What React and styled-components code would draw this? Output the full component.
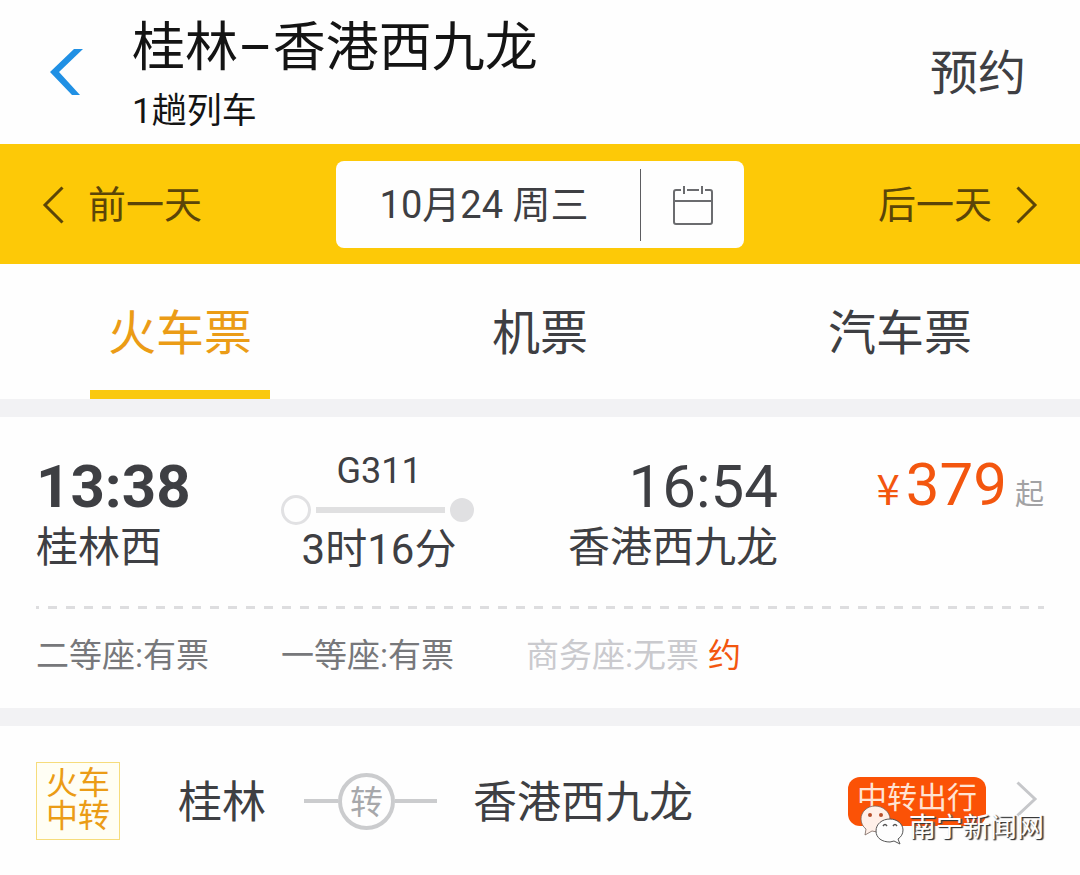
import React from "react";
import styled, { createGlobalStyle } from "styled-components";

const GlobalStyle = createGlobalStyle`
  * { box-sizing: border-box; }
  body {
    margin: 0;
    background: #fefefe;
    color: #3e3f43;
    font-family: Roboto, "Noto Sans CJK SC", sans-serif;
    white-space: nowrap;
  }
  button {
    margin: 0;
    padding: 0;
    border: 0;
    background: none;
    color: inherit;
    font: inherit;
    cursor: pointer;
  }
  h1, p { margin: 0; font-weight: 400; }
`;

const Page = styled.main`
  min-height: 100vh;
  background: #fefefe;
`;

const Header = styled.header`
  display: flex;
  align-items: center;
  height: 144px;
  padding: 0 54px 0 48px;
`;

const BackButton = styled.button`
  display: flex;
  width: 84px;
`;

const Heading = styled.div`
  flex: 1;
  padding-top: 10px;
  color: #141414;
`;

const Title = styled.h1`
  font-size: 53px;
  line-height: 70px;
`;

const Subtitle = styled.p`
  font-size: 35px;
  line-height: 58px;
`;

const ReserveButton = styled.button`
  padding-top: 4px;
  font-size: 48px;
  line-height: 72px;
`;

const DateBar = styled.section`
  display: grid;
  grid-template-columns: 1fr 408px 1fr;
  align-items: center;
  height: 120px;
  padding: 1px 42px 0;
  background: #fdc907;
`;

const DayButton = styled.button`
  display: flex;
  align-items: center;
  gap: 24px;
  justify-self: ${(p) => p.$side};
  color: #5b4508;
  font-size: 38px;
  line-height: 60px;
`;

const DateBox = styled.div`
  display: flex;
  align-items: center;
  height: 87px;
  border-radius: 8px;
  background: #fefefe;
`;

const DateButton = styled.button`
  flex: 1;
  padding-right: 8px;
  font-size: 38px;
  line-height: 72px;
  border-right: 1px solid #5c5d60;
`;

const CalendarButton = styled.button`
  display: flex;
  justify-content: center;
  width: 103px;
`;

const Tabs = styled.nav`
  display: grid;
  grid-template-columns: repeat(3, 1fr);
  height: 135px;
`;

const Tab = styled.button`
  display: flex;
  flex-direction: column;
  align-items: center;
  justify-content: space-between;
  padding-top: 34px;
  color: ${(p) => (p.$active ? "#eb9c16" : "inherit")};
  font-size: 48px;
  line-height: 72px;

  &::after {
    content: "";
    width: 50%;
    height: 9px;
    background: ${(p) => (p.$active ? "#fac90f" : "transparent")};
  }
`;

const Divider = styled.div`
  height: 18px;
  background: #f2f2f4;
`;

const TrainCard = styled.article`
  padding: 33px 36px 27px;
`;

const TripRow = styled.div`
  display: grid;
  grid-template-columns: 35fr 28fr 43fr 38fr;
  height: 156px;
`;

const Stop = styled.div`
  text-align: ${(p) => p.$align};
`;

const Time = styled.time`
  display: block;
  font-size: 60px;
  line-height: 74px;
  font-weight: ${(p) => (p.$bold ? 700 : 400)};
`;

const Station = styled.p`
  font-size: 42px;
  line-height: 48px;
`;

const Journey = styled.div`
  display: flex;
  flex-direction: column;
  align-items: center;
`;

const TrainNumber = styled.p`
  font-size: 36px;
  line-height: 42px;
`;

const Track = styled.div`
  display: flex;
  align-items: center;
  gap: 5px;
  width: 100%;
  height: 36px;
  padding-right: 3px;
`;

const TrackStart = styled.span`
  width: 30px;
  height: 30px;
  border: 3px solid #e1e1e3;
  border-radius: 50%;
`;

const TrackLine = styled.span`
  flex: 1;
  height: 6px;
  background: #e0e0e1;
`;

const TrackEnd = styled.span`
  width: 24px;
  height: 24px;
  border-radius: 50%;
  background: #e0e0e2;
`;

const Duration = styled.p`
  font-size: 42px;
  line-height: 44px;
`;

const Price = styled.p`
  display: flex;
  align-items: baseline;
  justify-content: flex-end;
  color: #f3560f;
  line-height: 70px;
`;

const Currency = styled.span`
  margin-right: 6px;
  font-family: "Noto Sans CJK SC", sans-serif;
  font-size: 42px;
`;

const Amount = styled.span`
  margin-right: 8px;
  font-size: 60px;
`;

const From = styled.span`
  color: #a2a2a4;
  font-size: 29px;
`;

const DashedLine = styled.div`
  height: 3px;
  background: repeating-linear-gradient(to right, #dddddf 0 9px, transparent 9px 18px) 12px 0 / 18px 3px;
`;

const Seats = styled.div`
  display: grid;
  grid-template-columns: 35fr 35fr 74fr;
  padding: 23px 0 1px;
  color: #77787b;
  font-size: 33px;
  line-height: 48px;
`;

const Seat = styled.span`
  color: ${(p) => (p.$soldOut ? "#cacace" : "inherit")};
`;

const WaitButton = styled.button`
  margin-left: 9px;
  color: #f3560f;
`;

const TransferRow = styled.section`
  position: relative;
  display: flex;
  align-items: center;
  height: 149px;
  padding: 1px 36px 0;
`;

const TransferTag = styled.span`
  width: 84px;
  margin-right: 58px;
  padding: 4px 0 6px;
  border: 1px solid #f6dc7c;
  background: #fffef4;
  color: #eb9c16;
  font-size: 32px;
  line-height: 33px;
  text-align: center;
  white-space: normal;
`;

const Place = styled.span`
  padding-top: 3px;
  font-size: 44px;
  line-height: 60px;
`;

const Via = styled.span`
  display: flex;
  align-items: center;
  margin: 0 36px 0 38px;
  color: #a7a8ab;
  font-size: 33px;
  line-height: 52px;

  &::before,
  &::after {
    content: "";
    width: 34px;
    height: 4px;
    background: #cbccce;
  }

  &::after { width: 42px; }
`;

const ViaCircle = styled.span`
  width: 57px;
  height: 57px;
  border: 4px solid #cbccce;
  border-radius: 50%;
  text-align: center;
`;

const TransferLink = styled.a`
  display: flex;
  align-items: flex-start;
  gap: 30px;
  margin-left: auto;
  padding-right: 6px;
  color: #ffe3d3;
  text-decoration: none;

  svg { margin-top: 4px; }
`;

const Pill = styled.span`
  height: 49px;
  padding: 0 9px;
  border-radius: 12px;
  background: #fb5206;
  font-size: 30px;
  line-height: 42px;
`;

const Watermark = styled.div`
  position: absolute;
  right: 36px;
  bottom: 24px;
  display: flex;
  align-items: flex-start;
  gap: 5px;
  color: #fefefe;
  font-size: 27px;
  line-height: 46px;
  text-shadow: 1px 1px 1px #333, 2px 1px 1px #666;
`;

const Arrow = ({ dir, width, height, color, stroke }) => {
  const s = stroke;
  const points =
    dir === "left"
      ? `${width - s / 2},${s / 2} ${s},${height / 2} ${width - s / 2},${height - s / 2}`
      : `${s / 2},${s / 2} ${width - s},${height / 2} ${s / 2},${height - s / 2}`;
  return (
    <svg width={width} height={height} viewBox={`0 0 ${width} ${height}`} aria-hidden="true">
      <polyline points={points} fill="none" stroke={color} strokeWidth={s} />
    </svg>
  );
};

const BackIcon = () => (
  <svg width="36" height="52" viewBox="0 0 36 52" aria-hidden="true">
    <path d="M26 3h9L11 26l21 23h-8L2 26z" fill="#2090e4" />
  </svg>
);

const CalendarIcon = () => (
  <svg width="40" height="42" viewBox="0 0 40 42" fill="none" stroke="#6b6c6f" strokeWidth="2" aria-hidden="true">
    <path d="M8 6H3a2 2 0 0 0-2 2v30a2 2 0 0 0 2 2h34a2 2 0 0 0 2-2V8a2 2 0 0 0-2-2h-5M14 6h12M1 17h38M11 2v8M29 2v8" />
  </svg>
);

const WechatIcon = () => (
  <svg width="44" height="40" viewBox="0 0 44 40" aria-hidden="true">
    <path d="M15 1C7 1 1 7 1 14c0 4 2 8 5 10l-1 6 7-4 5 1c7-1 13-6 13-13S23 1 15 1z" fill="#fff0e9" stroke="#77645d" strokeWidth="0.8" />
    <circle cx="10" cy="10" r="2" fill="#b54f2b" />
    <circle cx="21" cy="10" r="2" fill="#b54f2b" />
    <path d="M30 14c-8 0-14 5-14 12s6 11 14 11l4-1 6 3-2-5c3-2 5-5 5-9 0-6-6-11-13-11z" fill="#fefefe" stroke="#555" strokeWidth="1" />
    <path d="M23 21q2-3 4 0M33 21q2-3 4 0" fill="none" stroke="#555" strokeWidth="1.4" />
  </svg>
);

export default function App() {
  return (
    <Page>
      <GlobalStyle />
      <Header>
        <BackButton aria-label="返回"><BackIcon /></BackButton>
        <Heading>
          <Title>桂林–香港西九龙</Title>
          <Subtitle>1趟列车</Subtitle>
        </Heading>
        <ReserveButton>预约</ReserveButton>
      </Header>

      <DateBar>
        <DayButton $side="start">
          <Arrow dir="left" width={22} height={38} color="#5b4508" stroke={3} />
          前一天
        </DayButton>
        <DateBox>
          <DateButton>10月24 周三</DateButton>
          <CalendarButton aria-label="日历"><CalendarIcon /></CalendarButton>
        </DateBox>
        <DayButton $side="end">
          后一天
          <Arrow dir="right" width={22} height={38} color="#5b4508" stroke={3} />
        </DayButton>
      </DateBar>

      <Tabs>
        <Tab $active>火车票</Tab>
        <Tab>机票</Tab>
        <Tab>汽车票</Tab>
      </Tabs>
      <Divider />

      <TrainCard>
        <TripRow>
          <Stop $align="left">
            <Time $bold>13:38</Time>
            <Station>桂林西</Station>
          </Stop>
          <Journey>
            <TrainNumber>G311</TrainNumber>
            <Track><TrackStart /><TrackLine /><TrackEnd /></Track>
            <Duration>3时16分</Duration>
          </Journey>
          <Stop $align="right">
            <Time>16:54</Time>
            <Station>香港西九龙</Station>
          </Stop>
          <Price>
            <Currency>¥</Currency>
            <Amount>379</Amount>
            <From>起</From>
          </Price>
        </TripRow>
        <DashedLine />
        <Seats>
          <Seat>二等座:有票</Seat>
          <Seat>一等座:有票</Seat>
          <Seat $soldOut>商务座:无票<WaitButton>约</WaitButton></Seat>
        </Seats>
      </TrainCard>
      <Divider />

      <TransferRow>
        <TransferTag>火车中转</TransferTag>
        <Place>桂林</Place>
        <Via><ViaCircle>转</ViaCircle></Via>
        <Place>香港西九龙</Place>
        <TransferLink href="#transfer">
          <Pill>中转出行</Pill>
          <Arrow dir="right" width={22} height={36} color="#c6c7ca" stroke={3} />
        </TransferLink>
        <Watermark><WechatIcon />南宁新闻网</Watermark>
      </TransferRow>
    </Page>
  );
}
